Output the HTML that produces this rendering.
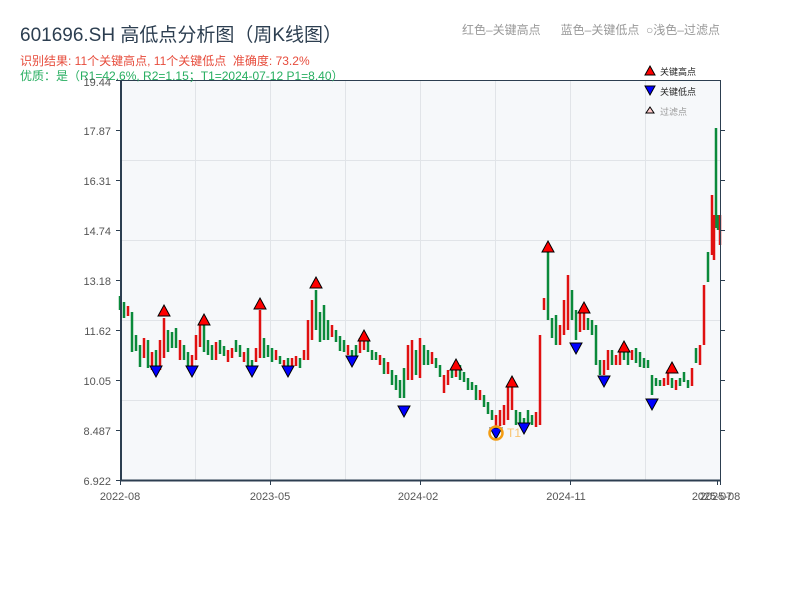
<!DOCTYPE html>
<html><head><meta charset="utf-8">
<style>
html,body{margin:0;padding:0;background:#fff;width:800px;height:600px;overflow:hidden;font-family:"Liberation Sans","Noto Sans CJK SC",sans-serif;}
.t{position:absolute;white-space:nowrap;}
</style></head><body>
<div class="t" style="left:20px;top:20px;font-size:19px;color:#2c3e50;">601696.SH 高低点分析图（周K线图）</div>
<div class="t" style="left:20px;top:52px;font-size:12px;color:#e74c3c;">识别结果: 11个关键高点, 11个关键低点&nbsp;&nbsp;准确度: 73.2%</div>
<div class="t" style="left:462px;top:21px;font-size:12px;color:#999;">红色–关键高点&nbsp;&nbsp;&nbsp;&nbsp;&nbsp;&nbsp;蓝色–关键低点&nbsp;&nbsp;○浅色–过滤点</div>
<svg width="800" height="600" style="position:absolute;left:0;top:0" xmlns="http://www.w3.org/2000/svg" font-family="Liberation Sans, Noto Sans CJK SC, sans-serif">
<rect x="120" y="80" width="600" height="400" fill="#f6f8fa"/>
<g stroke="#e1e4e8" stroke-width="1">
<line x1="195.5" y1="80" x2="195.5" y2="480"/><line x1="270.5" y1="80" x2="270.5" y2="480"/><line x1="345.5" y1="80" x2="345.5" y2="480"/><line x1="420.5" y1="80" x2="420.5" y2="480"/><line x1="495.5" y1="80" x2="495.5" y2="480"/><line x1="570.5" y1="80" x2="570.5" y2="480"/><line x1="645.5" y1="80" x2="645.5" y2="480"/>
<line x1="120" y1="160.5" x2="720" y2="160.5"/><line x1="120" y1="240.5" x2="720" y2="240.5"/><line x1="120" y1="320.5" x2="720" y2="320.5"/><line x1="120" y1="400.5" x2="720" y2="400.5"/>
</g>
<path stroke="#0a8a3a" stroke-width="2.5" fill="none" d="M120 296v14M124 302v16M132 312v40M136 335v16M140 345v22M148 340v28M156 350v20M168 330v22M172 332v16M176 328v20M184 345v15M188 352v14M204 322v30M208 340v15M212 345v15M220 340v14M224 346v10M236 340v12M240 345v12M248 348v18M252 360v8M264 338v20M268 345v12M272 348v14M280 356v8M288 358v10M300 358v10M316 290v40M320 312v30M324 305v35M328 320v20M336 330v12M340 336v15M344 340v12M352 350v10M356 345v12M368 340v12M372 350v10M376 352v8M384 358v16M392 370v15M396 375v15M400 380v18M404 368v30M416 350v25M424 345v20M428 350v15M436 358v10M440 365v12M452 368v10M460 365v15M464 372v10M468 378v12M472 382v8M476 385v15M484 395v12M488 402v12M492 410v10M516 410v15M520 412v12M524 418v8M528 410v15M532 415v10M548 250v70M552 318v20M556 315v30M572 290v30M576 310v30M588 318v12M592 320v15M596 325v40M600 360v15M612 350v15M624 345v15M628 350v15M636 348v15M640 352v15M644 358v10M648 360v8M652 375v20M656 378v8M660 380v6M672 378v10M680 378v8M684 372v10M688 380v8M696 348v15M708 252v30M716 128v100M718 215v15"/>
<path stroke="#e01010" stroke-width="2.5" fill="none" d="M128 306v10M144 338v20M152 352v18M160 340v30M164 318v40M180 340v20M192 355v12M196 335v25M200 325v22M216 342v18M228 350v12M232 348v10M244 352v10M256 348v14M260 310v48M276 350v10M284 360v8M292 358v8M296 356v10M304 350v10M308 320v40M312 300v40M332 325v12M348 345v10M360 338v15M364 332v18M380 355v10M388 362v12M408 345v35M412 340v40M420 338v40M432 352v12M444 375v18M448 370v15M456 365v12M480 390v10M496 415v12M500 410v16M504 405v20M508 385v35M512 380v30M536 412v15M540 335v90M544 298v12M560 325v20M564 300v35M568 275v55M580 312v20M584 305v25M604 360v15M608 350v20M616 355v10M620 350v15M632 350v10M664 378v8M668 370v15M676 380v10M692 368v18M700 345v20M704 285v60M712 195v60M714 215v45M720 215v30"/>
<g stroke="#000" stroke-width="1">
<g fill="#f00">
<polygon points="164,305 170,316 158,316"/><polygon points="204,314 210,325 198,325"/><polygon points="260,298 266,309 254,309"/><polygon points="316,277 322,288 310,288"/><polygon points="364,330 370,341 358,341"/><polygon points="456,359 462,370 450,370"/><polygon points="512,376 518,387 506,387"/><polygon points="548,241 554,252 542,252"/><polygon points="584,302 590,313 578,313"/><polygon points="624,341 630,352 618,352"/><polygon points="672,362 678,373 666,373"/>
</g>
<g fill="#00f">
<polygon points="150,366 162,366 156,377"/><polygon points="186,366 198,366 192,377"/><polygon points="246,366 258,366 252,377"/><polygon points="282,366 294,366 288,377"/><polygon points="346,356 358,356 352,367"/><polygon points="398,406 410,406 404,417"/><polygon points="490,428 502,428 496,439"/><polygon points="518,423 530,423 524,434"/><polygon points="570,343 582,343 576,354"/><polygon points="598,376 610,376 604,387"/><polygon points="646,399 658,399 652,410"/>
</g>
</g>
<circle cx="496" cy="433" r="6.5" fill="none" stroke="#f39c12" stroke-width="2.5"/>
<text x="507" y="437" font-size="12" fill="#f8c471">T1</text>
<g stroke="#2c3e50">
<line x1="121" y1="80" x2="121" y2="481" stroke-width="2"/>
<line x1="120" y1="480.5" x2="721" y2="480.5" stroke-width="2"/>
<line x1="120" y1="80.5" x2="720" y2="80.5" stroke-width="1"/>
<line x1="720.5" y1="80" x2="720.5" y2="480" stroke-width="1"/>
<line x1="116" y1="80.5" x2="120" y2="80.5"/><line x1="116" y1="130.5" x2="120" y2="130.5"/><line x1="116" y1="180.5" x2="120" y2="180.5"/><line x1="116" y1="230.5" x2="120" y2="230.5"/><line x1="116" y1="280.5" x2="120" y2="280.5"/><line x1="116" y1="330.5" x2="120" y2="330.5"/><line x1="116" y1="380.5" x2="120" y2="380.5"/><line x1="116" y1="430.5" x2="120" y2="430.5"/><line x1="116" y1="480.5" x2="120" y2="480.5"/>
<line x1="720" y1="130.5" x2="725" y2="130.5"/><line x1="720" y1="180.5" x2="725" y2="180.5"/><line x1="720" y1="230.5" x2="725" y2="230.5"/><line x1="720" y1="280.5" x2="725" y2="280.5"/><line x1="720" y1="330.5" x2="725" y2="330.5"/><line x1="720" y1="380.5" x2="725" y2="380.5"/><line x1="720" y1="430.5" x2="725" y2="430.5"/>
<line x1="120.5" y1="481" x2="120.5" y2="485"/><line x1="270.5" y1="481" x2="270.5" y2="485"/><line x1="420.5" y1="481" x2="420.5" y2="485"/><line x1="570.5" y1="481" x2="570.5" y2="485"/><line x1="717.5" y1="481" x2="717.5" y2="485"/><line x1="720.5" y1="481" x2="720.5" y2="485"/>
</g>
<g font-size="11" fill="#555" text-anchor="end">
<text x="111" y="135">17.87</text><text x="111" y="185">16.31</text><text x="111" y="235">14.74</text><text x="111" y="285">13.18</text><text x="111" y="335">11.62</text><text x="111" y="385">10.05</text><text x="111" y="435">8.487</text><text x="111" y="485">6.922</text>
</g>
<g font-size="11" fill="#555" text-anchor="middle">
<text x="120" y="500">2022-08</text><text x="270" y="500">2023-05</text><text x="418" y="500">2024-02</text><text x="566" y="500">2024-11</text><text x="712" y="500">2025-07</text><text x="720" y="500">2025-08</text>
</g>
<text x="20" y="80" font-size="12" fill="#27ae60">优质：是（R1=42.6%, R2=1.15；T1=2024-07-12 P1=8.40）</text>
<text x="111" y="86" font-size="11" fill="#555" text-anchor="end">19.44</text>
<g font-size="9">
<polygon points="650,66 655,75 645,75" fill="#f00" stroke="#000" stroke-width="1"/><text x="660" y="75" fill="#222">关键高点</text>
<polygon points="645,86 655,86 650,95" fill="#00f" stroke="#000" stroke-width="1"/><text x="660" y="95" fill="#222">关键低点</text>
<polygon points="650,107 654,113 646,113" fill="#fcc" stroke="#000" stroke-width="1"/><text x="660" y="115" fill="#999">过滤点</text>
</g>
</svg>
</body></html>
